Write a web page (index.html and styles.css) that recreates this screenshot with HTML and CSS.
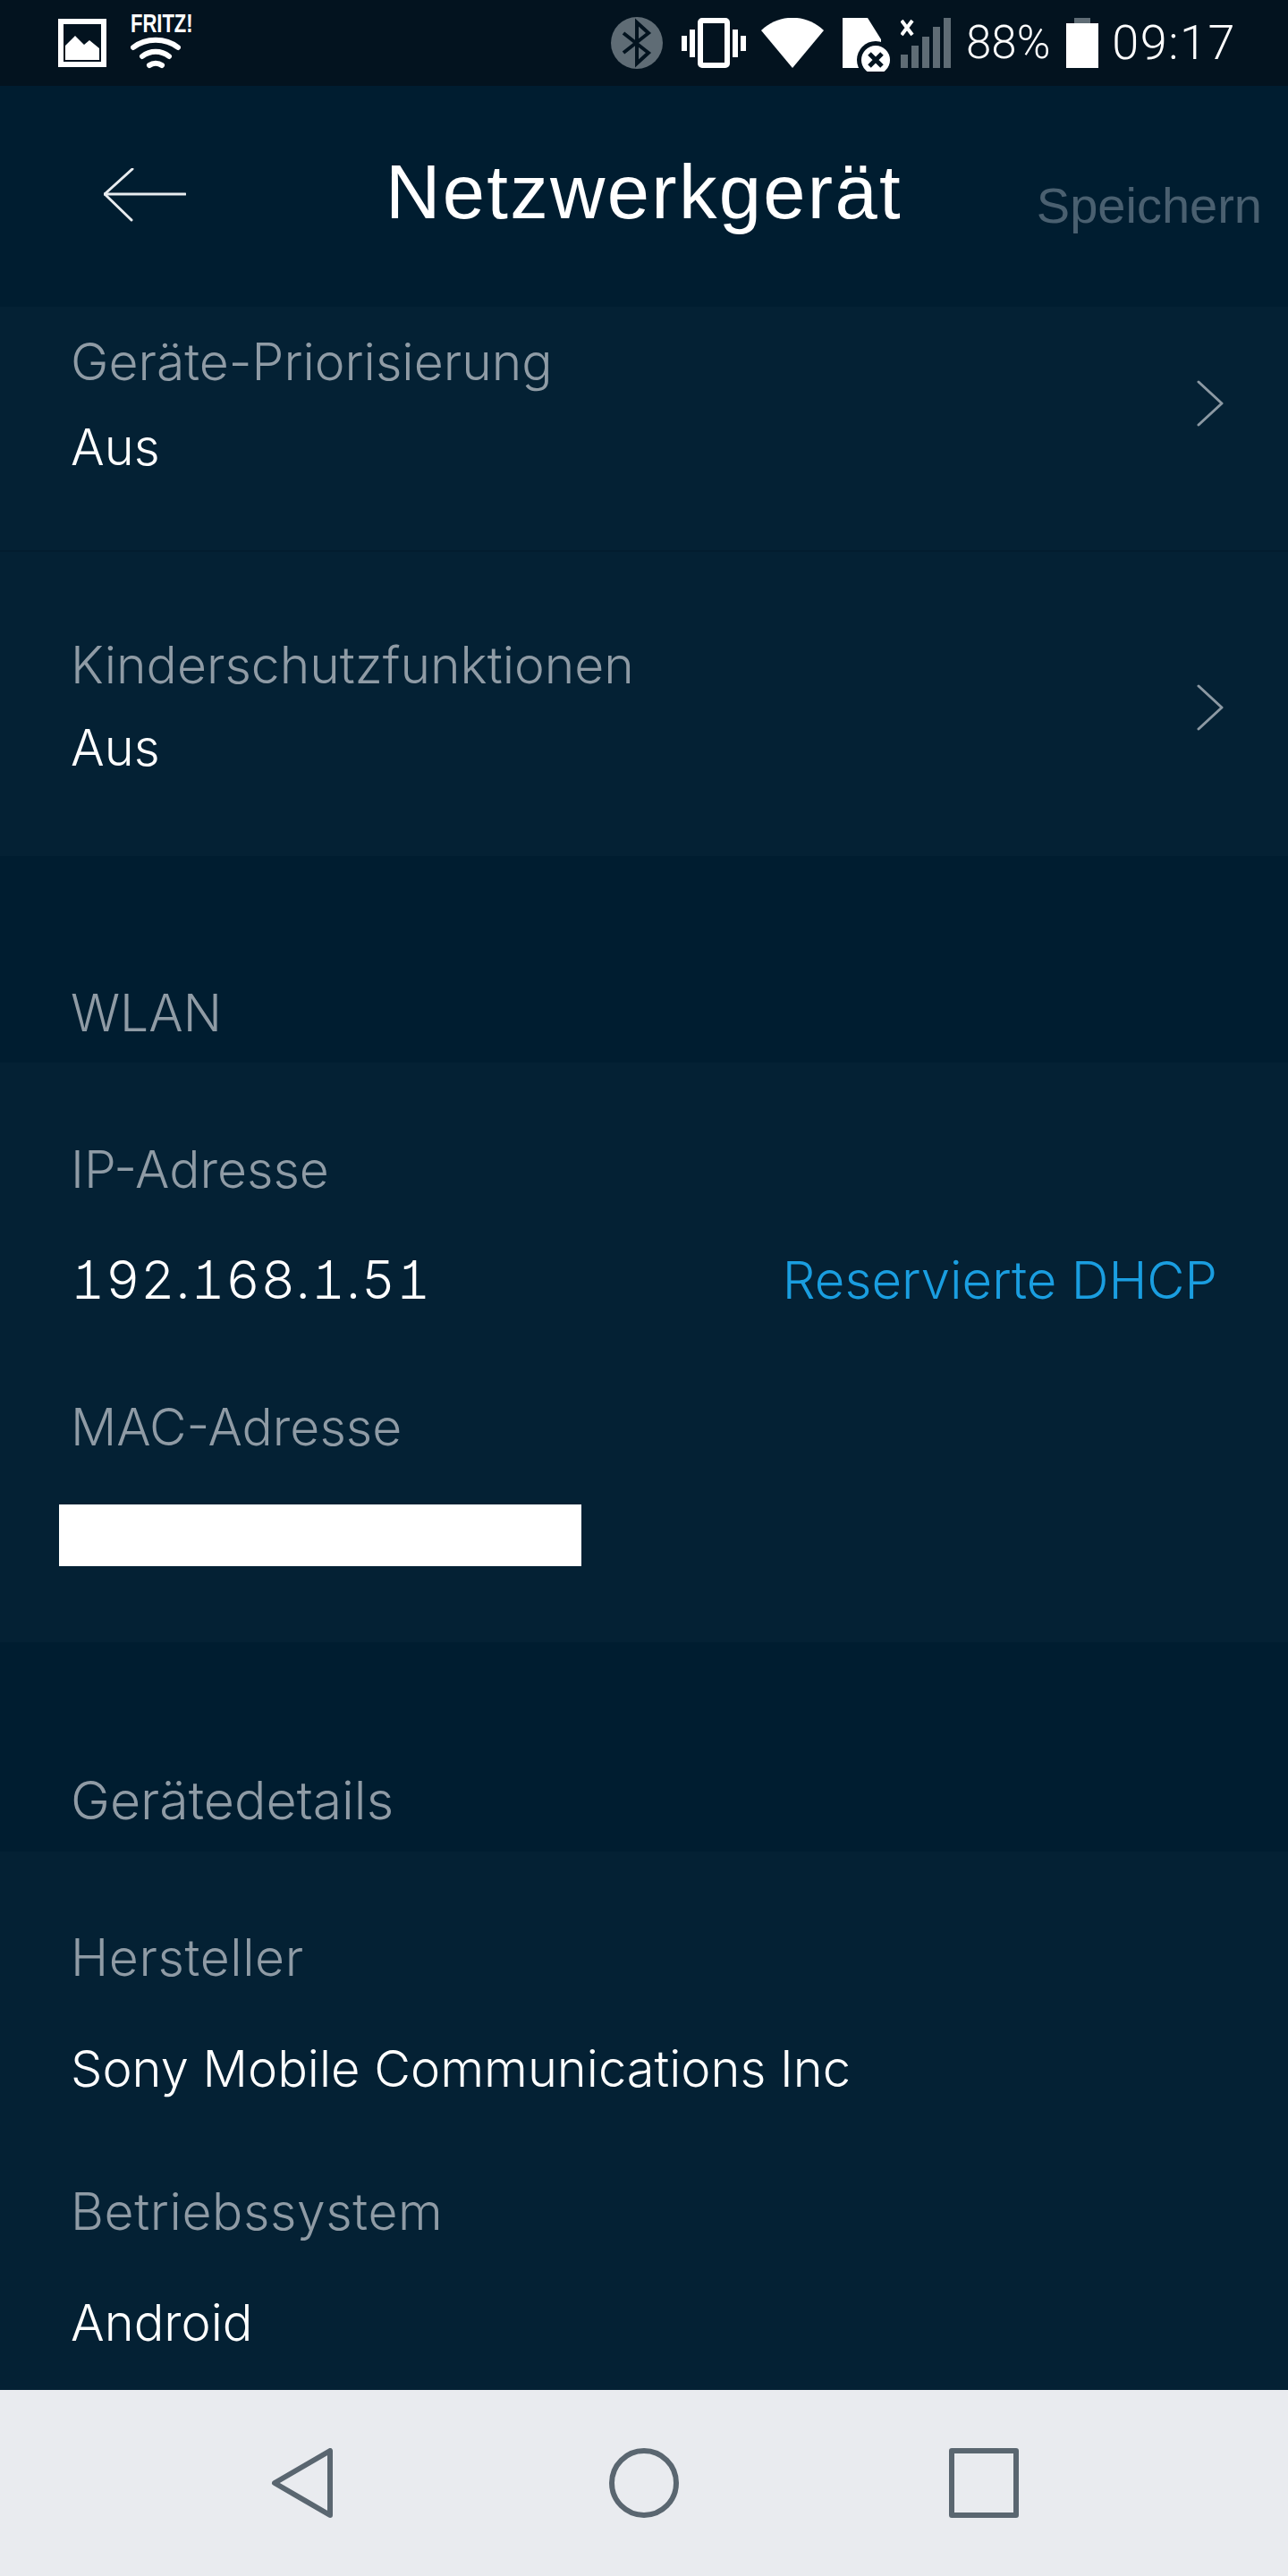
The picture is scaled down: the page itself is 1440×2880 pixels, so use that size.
FILE: index.html
```html
<!DOCTYPE html>
<html lang="de">
<head>
  <meta charset="UTF-8" />
  <title>Netzwerkgerät</title>
  <link rel="stylesheet" href="styles.css">
</head>
<body>
  <div class="screen">
    <div class="statusbar">
      <div class="status-left">
        <svg class="ic-image" width="54" height="54" viewBox="0 0 54 54">
          <rect x="3" y="3" width="48" height="48" fill="none" stroke="#fff" stroke-width="6"/>
          <path d="M8 46V30L19 19L29 29L35 24L46 33V46Z" fill="#fff"/>
        </svg>
        <div class="fritz">
          <svg width="72" height="34" viewBox="0 0 72 25" preserveAspectRatio="none"><text x="0" y="20.6" class="fritz-text">FRITZ!</text></svg>
          <svg class="fritz-wifi" width="56" height="36" viewBox="0 0 56 36" fill="none" stroke="#fff" stroke-width="6" stroke-linecap="round">
            <path d="M3 12C17 1 39 1 53 12"/>
            <path d="M13 22C22 15 34 15 43 22"/>
            <path d="M21 32C25 29 31 29 35 32"/>
          </svg>
        </div>
      </div>
      <div class="status-right">
        <svg width="58" height="58" viewBox="0 0 58 58" class="ic-bt">
          <circle cx="29" cy="29" r="29" fill="#5f6c75"/>
          <path d="M14 18L42 40L29 52V6L42 18L14 40" fill="none" stroke="#03131f" stroke-width="4"/>
        </svg>
        <svg width="72" height="56" viewBox="0 0 72 56" class="ic-vibrate">
          <rect x="21" y="3" width="30" height="50" rx="2" fill="none" stroke="#fff" stroke-width="6"/>
          <rect x="0" y="20" width="6" height="17" fill="#fff"/>
          <rect x="9" y="13" width="6" height="31" fill="#fff"/>
          <rect x="57" y="13" width="6" height="31" fill="#fff"/>
          <rect x="66" y="20" width="6" height="17" fill="#fff"/>
        </svg>
        <svg width="70" height="56" viewBox="0 0 70 56" class="ic-wifi">
          <path d="M0 14C20 -5 50 -5 70 14L35 56Z" fill="#fff"/>
        </svg>
        <svg width="58" height="60" viewBox="0 0 58 60" class="ic-sim">
          <path d="M0 0H28L43 24V56H0Z" fill="#fff"/>
          <circle cx="37" cy="47" r="21" fill="#03131f"/>
          <circle cx="37" cy="47" r="16" fill="#fff"/>
          <path d="M30 40L44 54M44 40L30 54" stroke="#03131f" stroke-width="5"/>
        </svg>
        <svg width="56" height="56" viewBox="0 0 56 56" class="ic-signal">
          <path d="M1 3L13 19M13 3L1 19" stroke="#fff" stroke-width="4"/>
          <rect x="0" y="41" width="8" height="15" fill="#5f6c75"/>
          <rect x="12" y="31" width="8" height="25" fill="#5f6c75"/>
          <rect x="24" y="21" width="8" height="35" fill="#5f6c75"/>
          <rect x="36" y="10" width="8" height="46" fill="#5f6c75"/>
          <rect x="48" y="0" width="8" height="56" fill="#5f6c75"/>
        </svg>
        <span class="status-text pct">88%</span>
        <svg width="36" height="56" viewBox="0 0 36 56" class="ic-battery">
          <rect x="9" y="0" width="18" height="6" fill="#5f6c75"/>
          <rect x="0" y="6" width="36" height="50" fill="#fff"/>
        </svg>
        <span class="status-text clock">09:17</span>
      </div>
    </div>

    <header class="topbar">
      <button class="back" aria-label="Zurück">
        <svg width="92" height="60" viewBox="0 0 92 60" fill="none" stroke="#e8ecef" stroke-width="3" stroke-linecap="round" stroke-linejoin="round">
          <path d="M91 29H1"/>
          <path d="M32 1L1 29L31 58"/>
        </svg>
      </button>
      <h1>Netzwerkgerät</h1>
      <span class="save">Speichern</span>
    </header>

    <section class="card">
      <div class="link-row first">
        <div>
          <div class="label">Geräte-Priorisierung</div>
          <div class="value">Aus</div>
        </div>
        <svg class="chevron" width="30" height="52" viewBox="0 0 30 52" fill="none" stroke="#8c99a3" stroke-width="3" stroke-linecap="round" stroke-linejoin="round"><path d="M2 2L28 26L2 50"/></svg>
      </div>
      <div class="link-row second">
        <div>
          <div class="label">Kinderschutzfunktionen</div>
          <div class="value">Aus</div>
        </div>
        <svg class="chevron" width="30" height="52" viewBox="0 0 30 52" fill="none" stroke="#8c99a3" stroke-width="3" stroke-linecap="round" stroke-linejoin="round"><path d="M2 2L28 26L2 50"/></svg>
      </div>
    </section>

    <div class="section-head wlan">WLAN</div>
    <section class="card fields wlan-card">
      <div class="label">IP-Adresse</div>
      <div class="value-row">
        <span class="value ip">192.168.1.51</span>
        <a class="dhcp">Reservierte DHCP</a>
      </div>
      <div class="label">MAC-Adresse</div>
      <div class="redacted"></div>
    </section>

    <div class="section-head details">Gerätedetails</div>
    <section class="card fields details-card">
      <div class="label">Hersteller</div>
      <div class="value">Sony Mobile Communications Inc</div>
      <div class="label">Betriebssystem</div>
      <div class="value">Android</div>
    </section>

    <nav class="navbar">
      <svg width="78" height="78" viewBox="0 0 78 78" fill="none" stroke="#5a6670" stroke-width="6" stroke-linejoin="round"><path d="M68 3V75L6 39Z"/></svg>
      <svg width="78" height="78" viewBox="0 0 78 78" fill="none" stroke="#5a6670" stroke-width="6"><circle cx="39" cy="39" r="36"/></svg>
      <svg width="78" height="78" viewBox="0 0 78 78" fill="none" stroke="#5a6670" stroke-width="6" stroke-linejoin="round"><rect x="3" y="3" width="72" height="72"/></svg>
    </nav>
  </div>
</body>
</html>
```
FILE: styles.css
```css
* {
  margin: 0;
  padding: 0;
  box-sizing: border-box;
}
body {
  font-family: 'Inter', 'Liberation Sans', sans-serif;
  font-weight: 300;
  background: #001d30;
  color: #fff;
}
.screen {
  width: 1440px;
  height: 2880px;
  display: flex;
  flex-direction: column;
  overflow: hidden;
}
svg {
  display: block;
  flex: none;
}

/* status bar */
.statusbar {
  height: 96px;
  background: #03131f;
  display: flex;
  justify-content: space-between;
  align-items: center;
  padding: 0 58px 0 65px;
}
.status-left {
  display: flex;
  align-items: flex-start;
  gap: 27px;
  height: 96px;
  padding-top: 21px;
}
.fritz {
  margin-top: -13px;
}
.fritz-text {
  font-family: 'Liberation Sans', sans-serif;
  font-weight: 700;
  font-size: 22px;
  fill: #fff;
}
.fritz-wifi {
  margin-top: -1px;
}
.status-right {
  display: flex;
  align-items: center;
  height: 96px;
}
.ic-bt { margin-right: 21px; }
.ic-vibrate { margin-right: 17px; }
.ic-wifi { margin-right: 21px; }
.ic-sim { margin-right: 7px; margin-top: 4px; }
.ic-signal { margin-right: 17px; }
.status-text {
  font-family: 'Roboto', sans-serif;
  font-size: 54px;
  line-height: 96px;
}
.clock { letter-spacing: 1.5px; }
.pct {
  font-size: 51px;
  margin-right: 18px;
}
.ic-battery { margin-right: 15px; }

/* header */
.topbar {
  height: 247px;
  background: #001d30;
  display: grid;
  grid-template-columns: 1fr auto 1fr;
  align-items: center;
  padding: 0 29px;
}
.back {
  background: none;
  border: 0;
  justify-self: start;
  margin-left: 87px;
  margin-bottom: 4px;
}
.topbar h1 {
  font-family: 'Liberation Sans', sans-serif;
  font-size: 85px;
  font-weight: 400;
  letter-spacing: 2.3px;
  line-height: 96px;
  margin-bottom: 10px;
}
.save {
  font-family: 'Liberation Sans', sans-serif;
  justify-self: end;
  font-size: 56px;
  font-weight: 400;
  color: #4a6070;
  margin-top: 19px;
}

/* content */
.card {
  background: #042134;
}
.section-head {
  background: #001d30;
  color: #8f9ba5;
  line-height: 70px;
  padding-left: 79px;
}
.section-head.wlan {
  font-size: 57px;
  height: 231px;
  padding-top: 141px;
}
.section-head.details {
  font-size: 59px;
  height: 234px;
  padding-top: 142px;
}
.label {
  color: #8f9ba5;
  font-size: 57px;
  line-height: 70px;
}
.value {
  color: #fff;
  font-size: 56px;
  line-height: 70px;
}
.value.ip {
  font-size: 59px;
  letter-spacing: 1px;
  font-feature-settings: 'tnum', 'cv01';
}
.link-row {
  padding-left: 79px;
  padding-right: 72px;
  display: flex;
  justify-content: space-between;
  align-items: center;
  height: 274px;
}
.link-row.first {
  border-bottom: 2px solid #031d2f;
  align-items: flex-start;
  padding-top: 27px;
}
.link-row.first .label { margin-bottom: 25px; }
.link-row.first .chevron { margin-top: 55px; }
.link-row.second {
  height: 340px;
  align-items: flex-start;
  padding-top: 92px;
}
.link-row.second .label { margin-bottom: 22px; }
.link-row.second .chevron { margin-top: 56px; }

.fields {
  padding-left: 79px;
  padding-right: 79px;
}
.wlan-card {
  height: 648px;
  padding-top: 85px;
}
.details-card {
  height: 602px;
  padding-top: 84px;
}
.details-card .label {
  letter-spacing: 0.6px;
}
.value-row {
  display: flex;
  justify-content: space-between;
  margin-top: 53px;
  margin-bottom: 95px;
}
.dhcp {
  color: #1a9ee0;
  font-size: 58px;
  line-height: 70px;
}
.redacted {
  background: #fff;
  width: 584px;
  height: 69px;
  margin-left: -13px;
  margin-top: 51px;
}
.details-card .value {
  margin-top: 54px;
  margin-bottom: 90px;
}

/* android nav */
.navbar {
  height: 208px;
  background: #e9ebef;
  display: flex;
  justify-content: space-between;
  padding: 65px 301px 0 301px;
  margin-top: auto;
}
```
